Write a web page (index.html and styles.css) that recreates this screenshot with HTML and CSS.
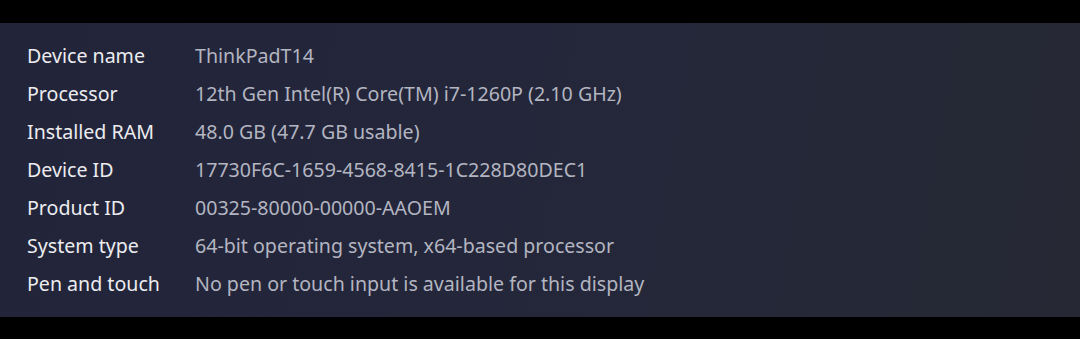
FILE: index.html
```html
<!DOCTYPE html>
<html lang="en">
<head>
    <meta charset="UTF-8">
    <meta name="viewport" content="width=device-width, initial-scale=1.0">
    <title>Device specifications</title>
    <link rel="stylesheet" href="styles.css">
</head>
<body>
    <div class="specs-panel">
        <div class="spec-row">
            <span class="spec-label">Device name</span>
            <span class="spec-value">ThinkPadT14</span>
        </div>
        <div class="spec-row">
            <span class="spec-label">Processor</span>
            <span class="spec-value">12th Gen Intel(R) Core(TM) i7-1260P (2.10 GHz)</span>
        </div>
        <div class="spec-row">
            <span class="spec-label">Installed RAM</span>
            <span class="spec-value">48.0 GB (47.7 GB usable)</span>
        </div>
        <div class="spec-row">
            <span class="spec-label">Device ID</span>
            <span class="spec-value">17730F6C-1659-4568-8415-1C228D80DEC1</span>
        </div>
        <div class="spec-row">
            <span class="spec-label">Product ID</span>
            <span class="spec-value">00325-80000-00000-AAOEM</span>
        </div>
        <div class="spec-row">
            <span class="spec-label">System type</span>
            <span class="spec-value">64-bit operating system, x64-based processor</span>
        </div>
        <div class="spec-row">
            <span class="spec-label">Pen and touch</span>
            <span class="spec-value">No pen or touch input is available for this display</span>
        </div>
    </div>
</body>
</html>
```

FILE: styles.css
```css
body {
    margin: 0;
    padding: 23px 0 22px;
    background-color: #000;
    font-family: "Noto Sans", "Open Sans", sans-serif;
}

.specs-panel {
    background: linear-gradient(100deg, #22253a 0%, #24273a 50%, #262934 100%);
    padding: 13px 27px 15px;
    height: 266px;
}

.spec-row {
    display: grid;
    grid-template-columns: 168px 1fr;
    height: 38px;
    align-items: center;
    font-size: 19.6px;
}

.spec-label {
    color: #ececf0;
}

.spec-value {
    color: #b3b5c1;
}
```
